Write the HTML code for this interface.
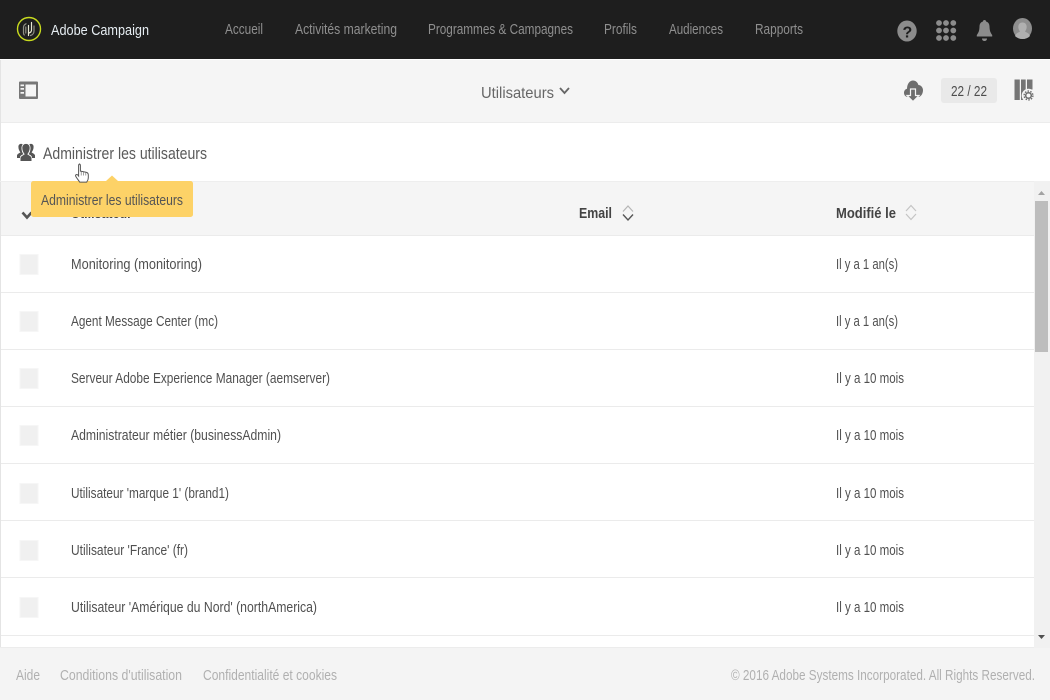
<!DOCTYPE html>
<html lang="fr"><head><meta charset="utf-8"><title>Adobe Campaign</title>
<style>
html,body{margin:0;padding:0;background:#fff;width:1050px;height:700px;overflow:hidden}
svg{display:block}
text{font-family:"Liberation Sans",sans-serif;font-size:15px}
.n{fill:#8f8f8f}
.r{fill:#505050;font-size:15px}
.f{fill:#b0b0b0}
.h{fill:#444;font-weight:bold;font-size:15px}
</style></head><body>
<svg width="1050" height="700" viewBox="0 0 1050 700" xmlns="http://www.w3.org/2000/svg">
<rect width="1050" height="700" fill="#fff"/>
<rect width="1050" height="59" fill="#1e1e1e"/>
<rect y="60" width="1050" height="62" fill="#f5f5f5"/>
<rect y="122" width="1050" height="1" fill="#ececec"/>
<rect width="1" height="648" y="60" fill="#e4e4e4"/>

<!-- logo -->
<circle cx="29" cy="29" r="11.5" fill="none" stroke="#c9dc1e" stroke-width="1.4"/>
<g fill="none" stroke-linecap="round">
<path d="M31.500 22.500V30c0 1.500-.8 2.500-2.500 3M28.500 35.500V25.500" stroke="#e8e8d2" stroke-width="1.200"/>
<path d="M34 26v5c0 2.300-1.500 4-3.500 4.500M26 23.800c-1.700.8-2.500 2-2.500 3.700V33c0 .8.300 1.500.8 2M25.800 27v6" stroke="#8f8f84" stroke-width="1.200"/>
</g>
<text x="51" y="35" fill="#e6edf2" textLength="98" lengthAdjust="spacingAndGlyphs">Adobe Campaign</text>

<!-- nav -->
<text class="n" x="225" y="34" textLength="38" lengthAdjust="spacingAndGlyphs">Accueil</text>
<text class="n" x="295" y="34" textLength="102" lengthAdjust="spacingAndGlyphs">Activités marketing</text>
<text class="n" x="428" y="34" textLength="145" lengthAdjust="spacingAndGlyphs">Programmes &amp; Campagnes</text>
<text class="n" x="604" y="34" textLength="33" lengthAdjust="spacingAndGlyphs">Profils</text>
<text class="n" x="669" y="34" textLength="54" lengthAdjust="spacingAndGlyphs">Audiences</text>
<text class="n" x="755" y="34" textLength="48" lengthAdjust="spacingAndGlyphs">Rapports</text>

<!-- top right icons -->
<ellipse cx="907" cy="31" rx="9.700" ry="10.500" fill="#8c8c8c"/>
<text x="902.500" y="37.500" style="font-size:16px;font-weight:bold" fill="#1e1e1e">?</text>
<g fill="#8c8c8c">
<circle cx="939" cy="23" r="2.900"/><circle cx="946" cy="23" r="2.900"/><circle cx="953.300" cy="23" r="2.900"/>
<circle cx="939" cy="30.500" r="2.900"/><circle cx="946" cy="30.500" r="2.900"/><circle cx="953.300" cy="30.500" r="2.900"/>
<circle cx="939" cy="38" r="2.900"/><circle cx="946" cy="38" r="2.900"/><circle cx="953.300" cy="38" r="2.900"/>
<path d="M984.500 20c1 0 1.600.7 1.600 1.500 2.400.7 3.300 2.600 3.400 5 .1 4 .8 6 2.700 8.500v1.500h-15.400V35c1.900-2.500 2.600-4.500 2.700-8.500.1-2.400 1-4.300 3.400-5 0-.8.600-1.500 1.600-1.500z"/>
<path d="M982 38.500h5c0 1.500-1 2.500-2.500 2.500s-2.500-1-2.500-2.500z"/>
</g>
<ellipse cx="1022.500" cy="28.500" rx="9.500" ry="10.500" fill="#8e8e8e"/>
<path d="M1015 36c1-3 3.500-3.500 5-4.500-1.500-2-2-4-1.500-6 .5-2 2-3 4-3s3.500 1 4 3c.5 2 0 4-1.500 6 1.500 1 4 1.500 5 4.500-2 2-4.500 3-7.500 3s-5.500-1-7.500-3z" fill="#b0b0b0"/>

<!-- toolbar -->
<rect x="19" y="81.500" width="19" height="17.500" rx="1" fill="#777"/>
<rect x="25.500" y="84.500" width="10.500" height="12" fill="#f5f5f5"/>
<rect x="20.500" y="84.500" width="3.500" height="1.700" fill="#f5f5f5"/>
<rect x="20.500" y="88" width="3.500" height="1.700" fill="#f5f5f5"/>
<rect x="20.500" y="92" width="3.500" height="1.700" fill="#f5f5f5"/>

<text x="481" y="98" fill="#666" style="font-size:16px" textLength="73" lengthAdjust="spacingAndGlyphs">Utilisateurs</text>
<path d="M560 88l4.500 5 4.500-5" fill="none" stroke="#666" stroke-width="1.800"/>

<path d="M908 97c-2.500 0-4-1.800-4-4.200 0-2.200 1.300-3.700 3-4.100.2-5 2.700-8.200 6-8.200 2.800 0 4.800 2 5.400 4.500 2.800.2 4.600 2.600 4.600 5.200 0 3.500-2.200 6.800-5 6.800z" fill="#6e6e6e"/>
<path d="M910.500 89h5v6.500h3.500l-6 6-6-6h3.500z" fill="#6e6e6e" stroke="#f5f5f5" stroke-width="1.200"/>

<rect x="941" y="78" width="56" height="25" rx="3" fill="#e9e9e9"/>
<text x="951" y="96" fill="#4d4d4d" textLength="36" lengthAdjust="spacingAndGlyphs">22 / 22</text>

<g fill="#757575">
<rect x="1014.500" y="79.500" width="5.300" height="20.500"/>
<rect x="1021" y="79.500" width="4.700" height="20.500"/>
<rect x="1027" y="79.500" width="5.500" height="10"/>
</g>
<circle cx="1028.500" cy="95.500" r="6.800" fill="#f5f5f5"/>
<circle cx="1028.500" cy="95.500" r="2.800" fill="none" stroke="#6a6a6a" stroke-width="1.500"/>
<circle cx="1028.500" cy="95.500" r="4.400" fill="none" stroke="#6a6a6a" stroke-width="1.400" stroke-dasharray="1.500 1.300"/>

<!-- title -->
<g fill="#555">
<path d="M17 158v-2.500c0-1.300 2.200-2.200 3.400-3.100-1.200-1.500-2-3.500-2-5.500 0-1.900 1-3 2.700-3 .7 0 1.200.2 1.600.5-.8 1-1.200 2.300-1.200 3.800 0 2.300.7 4.300 1.900 5.900-1.400.8-3.400 1.500-3.400 3.400v.5z"/>
<path d="M35 158v-2.500c0-1.300-2.200-2.200-3.400-3.100 1.200-1.500 2-3.500 2-5.500 0-1.900-1-3-2.700-3-.7 0-1.200.2-1.600.5.8 1 1.200 2.300 1.200 3.800 0 2.300-.7 4.300-1.900 5.900 1.400.8 3.400 1.500 3.400 3.400v.5z"/>
<path d="M20.500 161v-2.800c0-2 3-2.900 4.200-4-1.500-1.700-2.400-4-2.400-6.300 0-2.500 1.500-4 3.700-4s3.700 1.500 3.700 4c0 2.300-.9 4.600-2.400 6.300 1.200 1.100 4.200 2 4.200 4v2.800z"/>
</g>
<text x="43" y="159" fill="#5a5a5a" style="font-size:17px" textLength="164" lengthAdjust="spacingAndGlyphs">Administrer les utilisateurs</text>

<!-- table header -->
<rect y="182" width="1033" height="53" fill="#f5f5f5" x="1"/>
<rect x="0" y="181" width="1034" height="1" fill="#eeeeee"/>
<path d="M22.500 212.500l4.500 5 4.500-5" fill="none" stroke="#555" stroke-width="2.600"/>
<text class="h" x="71" y="218" textLength="61" lengthAdjust="spacingAndGlyphs">Utilisateur</text>
<text class="h" x="579" y="218" textLength="33" lengthAdjust="spacingAndGlyphs">Email</text>
<path d="M623 211.500l5-5.500 5 5.500" fill="none" stroke="#b5b5b5" stroke-width="1.200"/>
<path d="M623 214.500l5 5.500 5-5.500" fill="none" stroke="#555" stroke-width="1.400"/>
<text class="h" x="836" y="218" textLength="60" lengthAdjust="spacingAndGlyphs">Modifié le</text>
<path d="M906 211l5-5.500 5 5.500M906 214l5 5.500 5-5.500" fill="none" stroke="#c4c4c4" stroke-width="1.200"/>

<!-- row separators -->
<g fill="#ebebeb">
<rect x="1" y="235" width="1033" height="1"/>
<rect x="1" y="292" width="1033" height="1"/>
<rect x="1" y="349" width="1033" height="1"/>
<rect x="1" y="406" width="1033" height="1"/>
<rect x="1" y="463" width="1033" height="1"/>
<rect x="1" y="520" width="1033" height="1"/>
<rect x="1" y="577" width="1033" height="1"/>
<rect x="1" y="635" width="1033" height="1"/>
</g>

<!-- checkboxes -->
<g fill="#f0f0f0" stroke="#f6f6f6">
<rect x="20" y="254.500" width="18" height="20"/>
<rect x="20" y="311.500" width="18" height="20"/>
<rect x="20" y="368.500" width="18" height="20"/>
<rect x="20" y="425.500" width="18" height="20"/>
<rect x="20" y="483.500" width="18" height="20"/>
<rect x="20" y="540.500" width="18" height="20"/>
<rect x="20" y="597.500" width="18" height="20"/>
</g>

<!-- rows -->
<text class="r" x="71" y="269" textLength="131" lengthAdjust="spacingAndGlyphs">Monitoring (monitoring)</text>
<text class="r" x="836" y="269" textLength="62" lengthAdjust="spacingAndGlyphs">Il y a 1 an(s)</text>
<text class="r" x="71" y="326" textLength="147" lengthAdjust="spacingAndGlyphs">Agent Message Center (mc)</text>
<text class="r" x="836" y="326" textLength="62" lengthAdjust="spacingAndGlyphs">Il y a 1 an(s)</text>
<text class="r" x="71" y="383" textLength="259" lengthAdjust="spacingAndGlyphs">Serveur Adobe Experience Manager (aemserver)</text>
<text class="r" x="836" y="383" textLength="68" lengthAdjust="spacingAndGlyphs">Il y a 10 mois</text>
<text class="r" x="71" y="440" textLength="210" lengthAdjust="spacingAndGlyphs">Administrateur métier (businessAdmin)</text>
<text class="r" x="836" y="440" textLength="68" lengthAdjust="spacingAndGlyphs">Il y a 10 mois</text>
<text class="r" x="71" y="498" textLength="158" lengthAdjust="spacingAndGlyphs">Utilisateur 'marque 1' (brand1)</text>
<text class="r" x="836" y="498" textLength="68" lengthAdjust="spacingAndGlyphs">Il y a 10 mois</text>
<text class="r" x="71" y="555" textLength="117" lengthAdjust="spacingAndGlyphs">Utilisateur 'France' (fr)</text>
<text class="r" x="836" y="555" textLength="68" lengthAdjust="spacingAndGlyphs">Il y a 10 mois</text>
<text class="r" x="71" y="612" textLength="246" lengthAdjust="spacingAndGlyphs">Utilisateur 'Amérique du Nord' (northAmerica)</text>
<text class="r" x="836" y="612" textLength="68" lengthAdjust="spacingAndGlyphs">Il y a 10 mois</text>

<!-- scrollbar -->
<rect x="1034" y="181" width="16" height="467" fill="#f1f1f1"/>
<rect x="1035" y="201" width="13" height="151" fill="#bdbdbd"/>
<path d="M1038 195l3.500-4 3.500 4z" fill="#a3a3a3"/>
<path d="M1038 635h7l-3.500 4z" fill="#505050"/>

<!-- footer -->
<rect y="648" width="1050" height="52" fill="#f4f4f4"/>
<rect y="647" width="1034" height="1" fill="#ececec"/>
<text class="f" x="16" y="680" textLength="24" lengthAdjust="spacingAndGlyphs">Aide</text>
<text class="f" x="60" y="680" textLength="122" lengthAdjust="spacingAndGlyphs">Conditions d'utilisation</text>
<text class="f" x="203" y="680" textLength="134" lengthAdjust="spacingAndGlyphs">Confidentialité et cookies</text>
<text class="f" x="731" y="680" textLength="304" lengthAdjust="spacingAndGlyphs">© 2016 Adobe Systems Incorporated. All Rights Reserved.</text>

<!-- tooltip -->
<path d="M112 175.500l6 5.500h72.500a2.500 2.500 0 0 1 2.500 2.500v31a2.500 2.500 0 0 1-2.500 2.500h-157a2.500 2.500 0 0 1-2.500-2.500v-31a2.500 2.500 0 0 1 2.500-2.500h72.500z" fill="#fdd267"/>
<text x="41" y="205" fill="#555" textLength="142" lengthAdjust="spacingAndGlyphs">Administrer les utilisateurs</text>

<!-- hand cursor -->
<path d="M79 164c.9 0 1.400.7 1.400 1.600v5.500l5.600 1.200c1.500.3 2.300 1.300 2.300 2.600v3c0 1.700-.7 3-1.600 4.200h-7c-1-1.500-2.600-3.600-3.800-5.500-.5-.8-.4-1.500.2-1.900.6-.4 1.300-.2 1.800.4l.7.900v-10.400c0-.9.500-1.600 1.400-1.600z" fill="#fff" stroke="#555" stroke-width="1"/>
<path d="M81.200 171.500v4M83.500 172v3.500M85.800 172.500v3" stroke="#777" stroke-width=".7" fill="none"/>
</svg>
</body></html>
